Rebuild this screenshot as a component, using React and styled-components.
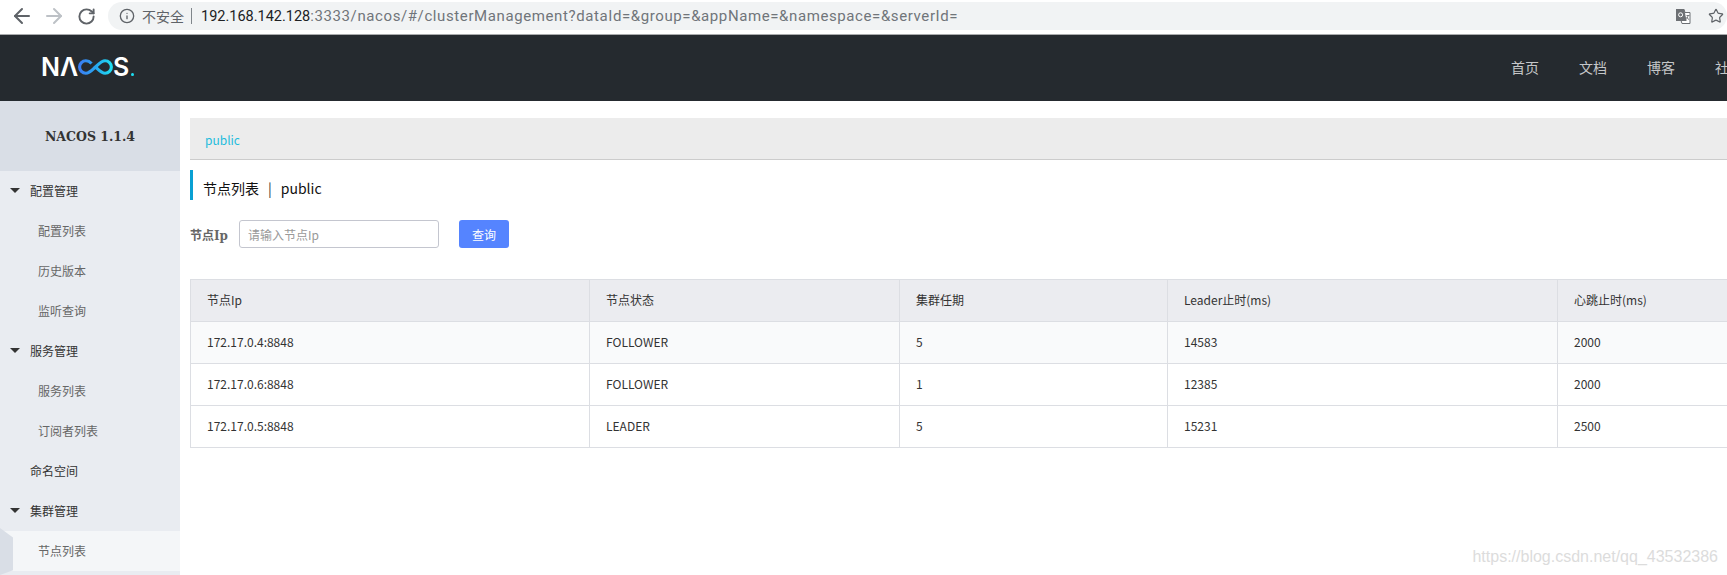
import { styled, createGlobalStyle } from "styled-components";
import { ArrowLeft, ArrowRight, RotateCw, Info, Star } from "lucide-react";

const cjk = `"Noto Sans CJK SC", "Noto Sans", sans-serif`;
const serif = `"DejaVu Serif", "Noto Sans CJK SC", serif`;

const GlobalStyle = createGlobalStyle`
    html, body {
        margin: 0;
        padding: 0;
        height: 100%;
        overflow: hidden;
        background: #fff;
    }
    * { box-sizing: border-box; }
`;

const menu = [
    { label: "配置管理", group: true },
    { label: "配置列表" },
    { label: "历史版本" },
    { label: "监听查询" },
    { label: "服务管理", group: true },
    { label: "服务列表" },
    { label: "订阅者列表" },
    { label: "命名空间", top: true },
    { label: "集群管理", group: true },
    { label: "节点列表", active: true },
];

const columns = [
    { title: "节点Ip", width: 399 },
    { title: "节点状态", width: 310 },
    { title: "集群任期", width: 268 },
    { title: "Leader止时(ms)", width: 390 },
    { title: "心跳止时(ms)", width: 400 },
];

const rows = [
    ["172.17.0.4:8848", "FOLLOWER", "5", "14583", "2000"],
    ["172.17.0.6:8848", "FOLLOWER", "1", "12385", "2000"],
    ["172.17.0.5:8848", "LEADER", "5", "15231", "2500"],
];

const navLinks = ["首页", "文档", "博客", "社区"];

const TranslateIcon = () => (
    <svg width="15" height="15" viewBox="0 0 15 15">
        <path d="M0 0.5h8l1 3h5v11H6l-1-3H0z" fill="#fff" stroke="#6d7074" strokeWidth="1" />
        <path d="M0 0h8.2l2.4 12H0z" fill="#6d7074" />
        <circle cx="4.6" cy="5.8" r="2" fill="none" stroke="#fff" strokeWidth="1" />
        <path d="M10.5 6.5h3M12 6.5c-.3 2-1.200 3.200-2 4M10.600 8c.5 1.200 1.500 2 2.600 2.700" fill="none" stroke="#6d7074" strokeWidth=".9" />
    </svg>
);

const Infinity = () => (
    <svg width="40" height="18" viewBox="0 0 40 18">
        <defs>
            <linearGradient id="loop" x1="0" x2="1" y1="0" y2="0">
                <stop offset="0" stopColor="#3b7df2" />
                <stop offset="0.5" stopColor="#28a6f0" />
                <stop offset="1" stopColor="#1ddcf0" />
            </linearGradient>
        </defs>
        <path
            d="M15.500 5C13.500 2.800 11.500 1.800 9 1.800 5 1.800 1.800 5 1.800 9S5 16.200 9 16.200c4 0 7-3.500 11-7.200s7-7.200 11-7.200c4 0 7.200 3.200 7.200 7.200s-3.200 7.200-7.200 7.200c-4 0-7-3.500-11-7.200"
            fill="none"
            stroke="url(#loop)"
            strokeWidth="3.600"
        />
    </svg>
);

const App = () => {
    return <Page>
        <GlobalStyle />
        <BrowserBar>
            <BarButton><ArrowLeft size={24} strokeWidth={2} color="#5f6368" /></BarButton>
            <BarButton><ArrowRight size={24} strokeWidth={2} color="#bdc1c6" /></BarButton>
            <BarButton $indent={3}><RotateCw size={19} strokeWidth={2.400} color="#5f6368" /></BarButton>
            <AddressBar>
                <Info size={16} strokeWidth={2} color="#5f6368" />
                <Insecure>不安全</Insecure>
                <Divider />
                <Url><b>192.168.142.128</b><span>:3333/nacos/#/clusterManagement?dataId=&amp;group=&amp;appName=&amp;namespace=&amp;serverId=</span></Url>
                <BarIcons>
                    <TranslateIcon />
                    <Star size={16} strokeWidth={1.800} color="#5f6368" />
                </BarIcons>
            </AddressBar>
        </BrowserBar>

        <TopNav>
            <Logo>
                <LogoText>NΛ</LogoText>
                <Infinity />
                <LogoText>S</LogoText>
                <LogoDot />
            </Logo>
            <NavList>
                {navLinks.map((link) => <NavItem key={link}>{link}</NavItem>)}
            </NavList>
        </TopNav>

        <Body>
            <Sidebar>
                <SideTitle>NACOS 1.1.4</SideTitle>
                {menu.map((item) => (
                    <MenuItem key={item.label} $group={item.group} $top={item.top} $active={item.active}>
                        {item.group && <Caret />}
                        {item.label}
                    </MenuItem>
                ))}
            </Sidebar>

            <Main>
                <Crumbs>public</Crumbs>
                <Title>节点列表<TitleSep>|</TitleSep>public</Title>
                <SearchForm>
                    <FormLabel>节点Ip</FormLabel>
                    <SearchInput type="text" placeholder="请输入节点Ip" />
                    <SearchButton>查询</SearchButton>
                </SearchForm>
                <Table>
                    <colgroup>
                        {columns.map((col) => <col key={col.title} width={col.width} />)}
                    </colgroup>
                    <thead>
                        <tr>
                            {columns.map((col) => <HeadCell key={col.title}>{col.title}</HeadCell>)}
                        </tr>
                    </thead>
                    <tbody>
                        {rows.map((row, i) => (
                            <Row key={row[0]} $shaded={i === 0}>
                                {row.map((cell, j) => <Cell key={j}>{cell}</Cell>)}
                            </Row>
                        ))}
                    </tbody>
                </Table>
            </Main>
        </Body>
        <Watermark>https://blog.csdn.net/qq_43532386</Watermark>
    </Page>;
}

export default App;

const Page = styled.div`
    position: relative;
    width: 1727px;
    height: 575px;
    overflow: hidden;
    display: flex;
    flex-direction: column;
    font-family: ${cjk};
    color: #333;
`

const BrowserBar = styled.div`
    height: 35px;
    flex-shrink: 0;
    display: flex;
    align-items: flex-start;
    padding: 2px 0 0 10px;
    background: #fff;
    border-bottom: 1px solid #a9abad;
`

const BarButton = styled.div`
    width: 32px;
    height: 28px;
    display: flex;
    align-items: center;
    justify-content: flex-start;
    padding-left: ${(p) => p.$indent || 0}px;
`

const AddressBar = styled.div`
    width: 1619px;
    height: 28px;
    margin-left: 2px;
    display: flex;
    align-items: center;
    padding-left: 11px;
    background: #f1f3f4;
    border-radius: 14px;
`

const Insecure = styled.span`
    margin-left: 7px;
    font-size: 14px;
    color: #5f6368;
`

const Divider = styled.span`
    width: 1px;
    height: 16px;
    margin: 0 9px 0 7px;
    background: #80868b;
`

const Url = styled.span`
    font-family: Roboto, sans-serif;
    font-size: 14.500px;
    white-space: nowrap;

    b {
        font-weight: 400;
        color: #202124;
    }

    span {
        font-size: 15px;
        letter-spacing: 0.6px;
        color: #70757a;
    }
`

const BarIcons = styled.div`
    margin-left: auto;
    padding-right: 3px;
    display: flex;
    align-items: center;
    gap: 17px;
`

const TopNav = styled.header`
    height: 66px;
    flex-shrink: 0;
    display: flex;
    align-items: center;
    padding-left: 41px;
    background: #252a2f;
    overflow: hidden;
`

const Logo = styled.div`
    width: 93px;
    flex-shrink: 0;
    display: flex;
    align-items: center;
    position: relative;
    top: -1px;
`

const LogoText = styled.span`
    font-family: Inter, sans-serif;
    font-size: 25px;
    line-height: 18px;
    font-weight: 600;
    color: #fff;
`

const LogoDot = styled.span`
    width: 3px;
    height: 3px;
    margin: 15px 0 0 2px;
    border-radius: 50%;
    background: #1ddcf0;
`

const NavList = styled.nav`
    margin-left: 1377px;
    padding-bottom: 2px;
    display: flex;
    flex-shrink: 0;
    gap: 40px;
`

const NavItem = styled.span`
    font-size: 14px;
    color: #c5c7c9;
    white-space: nowrap;
`

const Body = styled.div`
    flex: 1;
    display: flex;
    min-height: 0;
`

const Sidebar = styled.aside`
    width: 180px;
    flex-shrink: 0;
    background: #e9ecf1;
`

const SideTitle = styled.div`
    height: 70px;
    display: flex;
    align-items: center;
    justify-content: center;
    font-family: ${serif};
    font-size: 12.500px;
    font-weight: 700;
    color: #333;
    background: #d9dee6;
`

const MenuItem = styled.div`
    position: relative;
    height: 40px;
    padding-bottom: 1px;
    display: flex;
    align-items: center;
    font-size: 12px;
    padding-left: ${(p) => (p.$group || p.$top ? "30px" : "38px")};
    color: ${(p) => (p.$group || p.$top ? "#333" : "#666")};
    background: ${(p) => (p.$active ? "#f4f6f8" : "transparent")};

    ${(p) => p.$active && `
        &::before {
            content: "";
            position: absolute;
            left: 0;
            top: -3px;
            width: 13px;
            height: 47px;
            background: #d9dee6;
            clip-path: polygon(0 0, 100% 20%, 100% 90%, 0 100%);
        }
    `}
`

const Caret = styled.i`
    position: absolute;
    left: 10px;
    top: 17px;
    width: 0;
    height: 0;
    border-left: 5px solid transparent;
    border-right: 5px solid transparent;
    border-top: 5px solid #333;
`

const Main = styled.main`
    flex: 1;
    min-width: 0;
    padding: 17px 0 0 10px;
`

const Crumbs = styled.div`
    height: 42px;
    padding: 13px 0 0 15px;
    font-size: 12px;
    line-height: 18px;
    color: #1fbcdc;
    background: #ececec;
    border-bottom: 1px solid #ccc;
`

const Title = styled.div`
    height: 30px;
    margin-top: 10px;
    padding: 5px 0 0 10px;
    display: flex;
    align-items: center;
    font-size: 14px;
    color: #111;
    border-left: 3px solid #09a0d3;
`

const TitleSep = styled.span`
    margin: 0 9px;
    color: #333;
`

const SearchForm = styled.div`
    margin-top: 20px;
    display: flex;
    align-items: center;
`

const FormLabel = styled.label`
    width: 49px;
    font-family: ${serif};
    font-size: 12px;
    font-weight: 700;
    color: #666;
`

const SearchInput = styled.input`
    width: 200px;
    height: 28px;
    padding: 0 8px;
    font-family: inherit;
    font-size: 12px;
    color: #333;
    background: #fff;
    border: 1px solid #c4c6cf;
    border-radius: 3px;
    outline: none;

    &::placeholder { color: #999; }
`

const SearchButton = styled.button`
    width: 50px;
    height: 28px;
    margin-left: 20px;
    padding: 0;
    font-family: inherit;
    font-size: 12px;
    color: #fff;
    background: #5584ff;
    border: none;
    border-radius: 3px;
`

const Table = styled.table`
    width: 1767px;
    margin-top: 31px;
    table-layout: fixed;
    border-collapse: collapse;
    font-size: 12px;
`

const HeadCell = styled.th`
    height: 42px;
    padding: 0 16px 2px;
    font-weight: 400;
    text-align: left;
    color: #333;
    background: #ebecf0;
    border: 1px solid #dcdee3;
`

const Row = styled.tr`
    background: ${(p) => (p.$shaded ? "#f9fafb" : "#fff")};
`

const Cell = styled.td`
    height: 42px;
    padding: 0 16px 3px;
    color: #333;
    border: 1px solid #dcdee3;
`

const Watermark = styled.span`
    position: absolute;
    right: 9px;
    bottom: 9px;
    font-family: "Liberation Sans", sans-serif;
    font-size: 16px;
    color: #dcdcdc;
`
